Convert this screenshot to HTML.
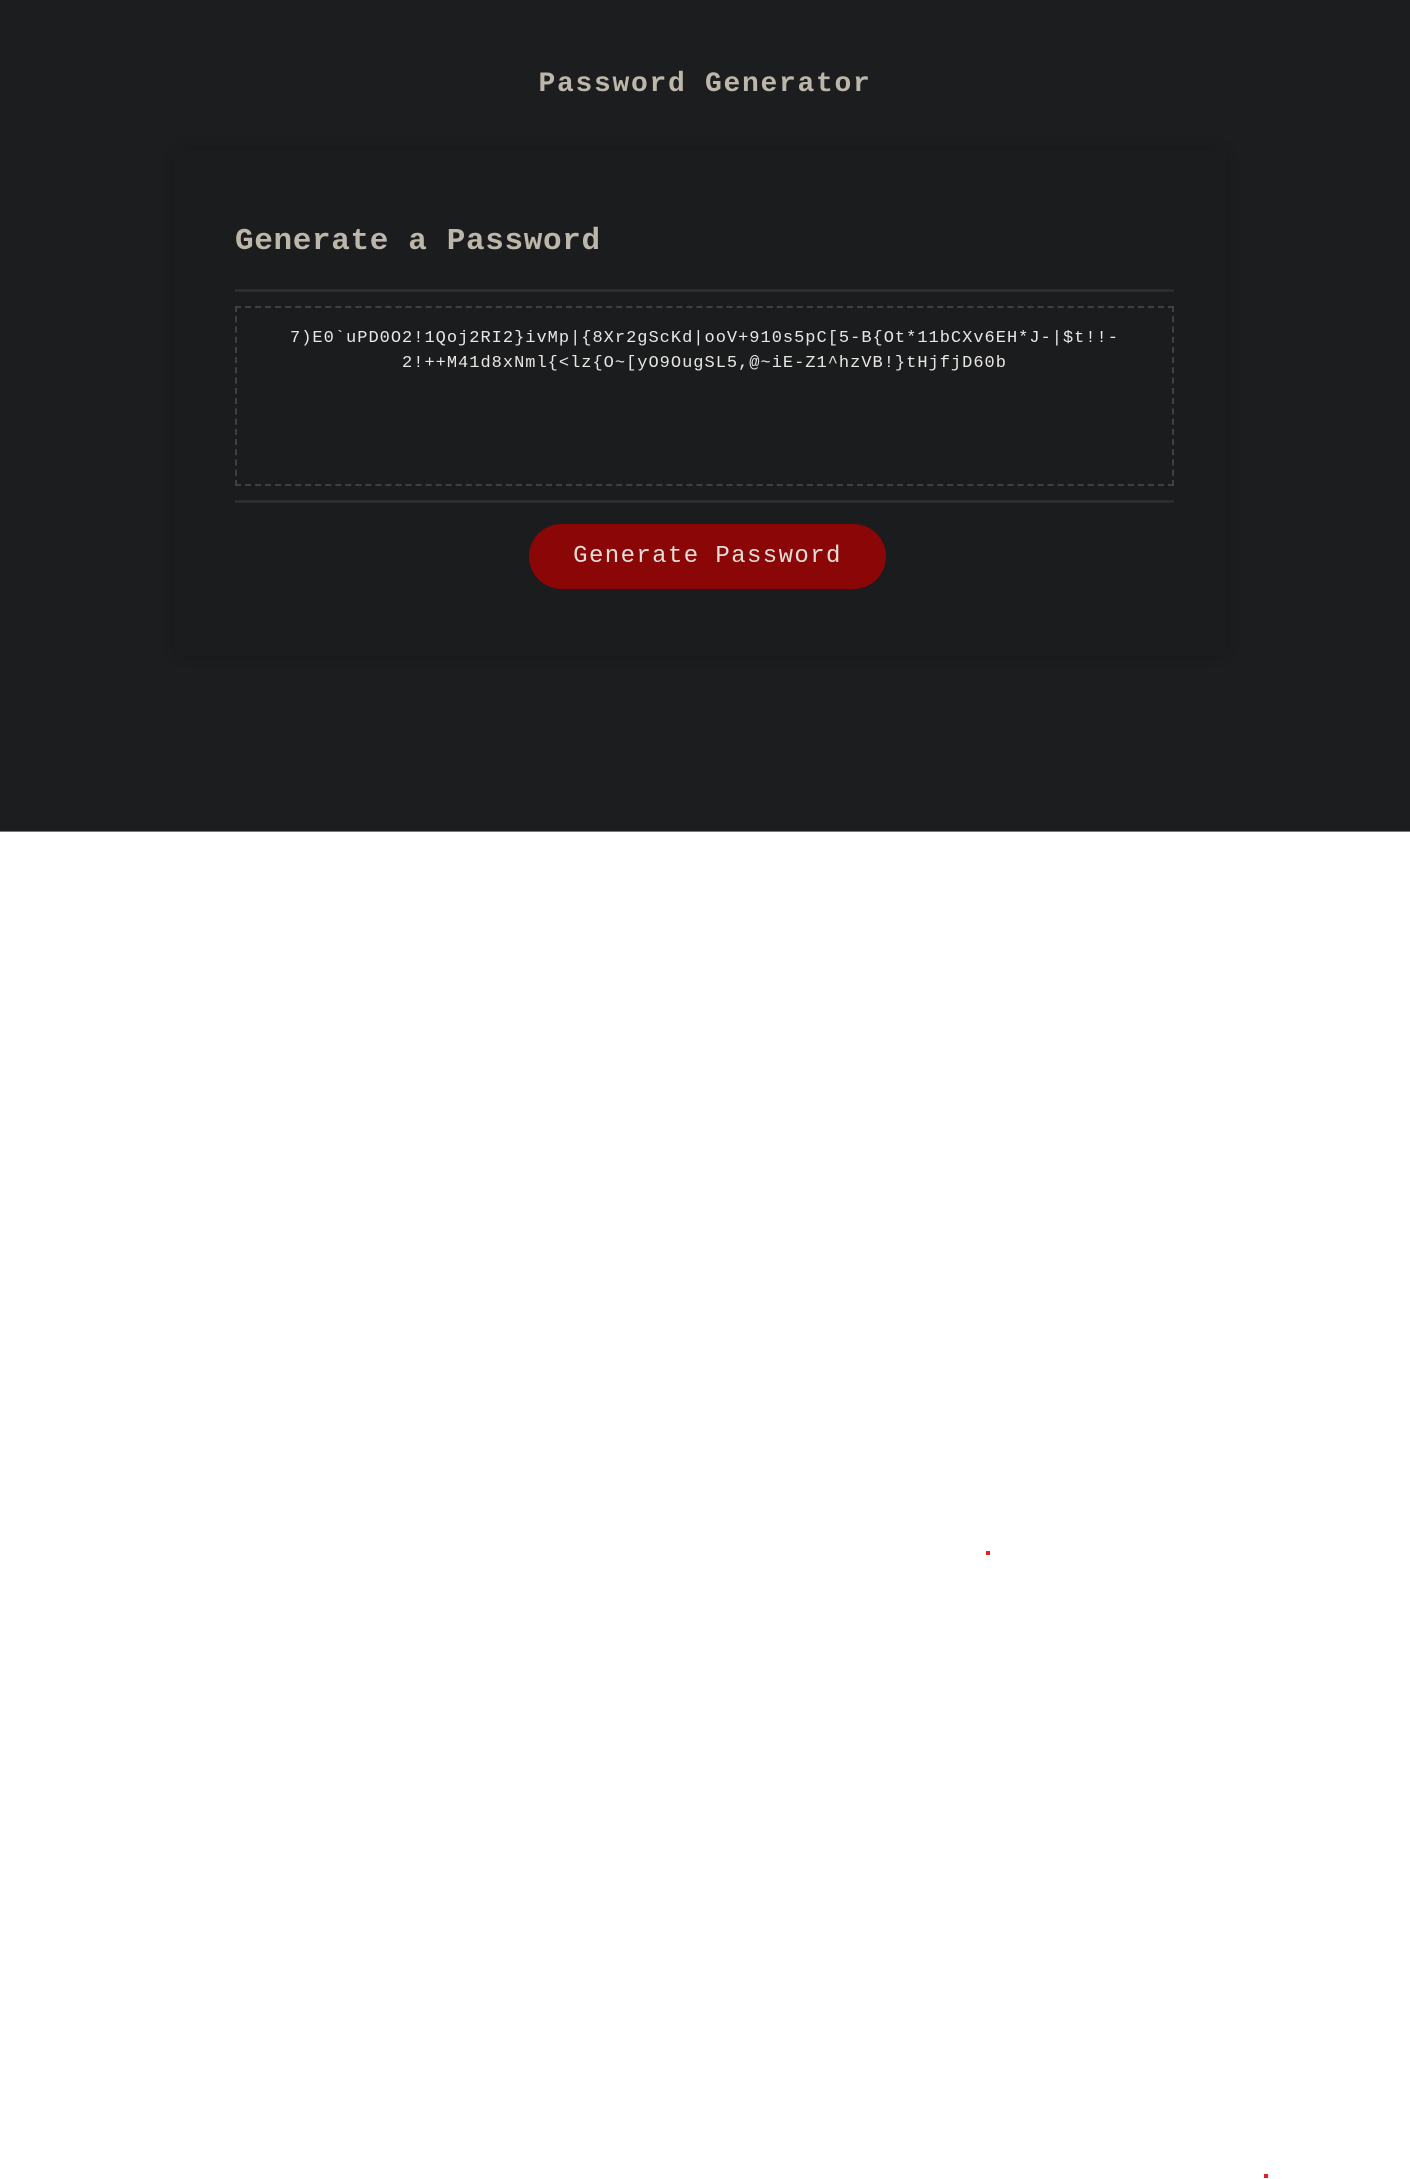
<!DOCTYPE html>
<html><head><meta charset="utf-8"><style>
html,body{margin:0;padding:0;background:#fff;width:1410px;height:2179px;overflow:hidden;position:relative;font-family:"Liberation Mono",monospace}
.dark{position:absolute;left:0;top:0;width:1410px;height:831px;background:#1c1d1f;border-bottom:1px solid #777}
.title{position:absolute;left:0;width:1410px;top:65px;text-align:center;font-size:28px;font-weight:bold;letter-spacing:1.7px;color:#bdb6aa;line-height:40px}
.card{position:absolute;left:174px;top:149px;width:1053px;height:507px;background:#1b1c1e;border-radius:8px;box-shadow:0 0 12px rgba(0,0,0,.15)}
.h2{position:absolute;left:235px;top:222px;font-size:31px;font-weight:bold;letter-spacing:0.65px;color:#bdb6aa;line-height:40px}
.hr{position:absolute;left:235px;width:939px;height:3px;background:#2a2c2e}
.ta{position:absolute;left:235px;top:306px;border:2px dashed #3e4144;color:#e8e6e3;font-size:17px;letter-spacing:1.0px;line-height:25px;text-align:center;padding-top:18px;box-sizing:border-box;width:939px;height:180px}
.btn{position:absolute;left:529px;top:524px;width:357px;height:65px;border-radius:33px;background:#8b0606;color:#e2ddd8;font-size:24px;letter-spacing:1.4px;text-align:center;line-height:66px}
.dot{position:absolute;width:4px;height:4px;background:#e8201a}
</style></head><body>
<div class="dark"></div>
<div class="title">Password Generator</div>
<div class="card"></div>
<div class="h2">Generate a Password</div>
<div class="hr" style="top:289px"></div>
<div class="ta">7)E0`uPD0O2!1Qoj2RI2}ivMp|{8Xr2gScKd|ooV+910s5pC[5-B{Ot*11bCXv6EH*J-|$t!!-<br>2!++M41d8xNml{&lt;lz{O~[yO9OugSL5,@~iE-Z1^hzVB!}tHjfjD60b</div>
<div class="hr" style="top:500px"></div>
<div class="btn">Generate Password</div>
<div class="dot" style="left:986px;top:1551px"></div>
<div class="dot" style="left:1264px;top:2174px"></div>
</body></html>
